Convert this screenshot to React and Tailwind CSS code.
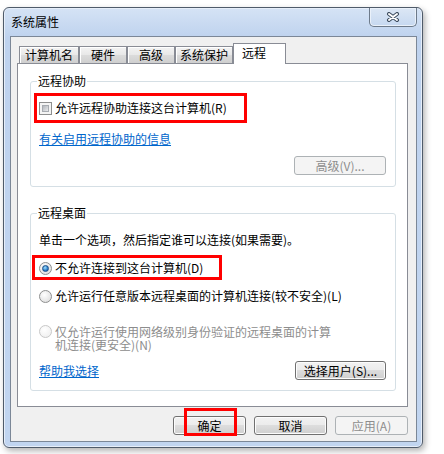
import React from 'react';

const tabs = [
  { label: '计算机名', w: 'w-[60px]' },
  { label: '硬件', w: 'w-[48px]' },
  { label: '高级', w: 'w-[48px]' },
  { label: '系统保护', w: 'w-[58px]' },
];

const Checkbox = () => (
  <div className="h-[13px] w-[13px] shrink-0 border border-[#8e8f8f] bg-[#f4f4f4] p-[2px]">
    <div className="h-full w-full border border-[#a7abb1] bg-[linear-gradient(135deg,#b3b7bd,#e9eaec)]" />
  </div>
);

const Radio = ({ checked, disabled }) => (
  <div
    className={`flex h-[13px] w-[13px] shrink-0 items-center justify-center rounded-full border ${
      disabled
        ? 'border-[#c8c8c8] bg-[radial-gradient(circle_at_40%_35%,#ffffff,#ececec)]'
        : 'border-[#8e8f8f] bg-[radial-gradient(circle_at_40%_35%,#ffffff,#d8d8d8)]'
    }`}
  >
    {checked && (
      <div className="h-[7px] w-[7px] rounded-full border border-[#1b4f87] bg-[radial-gradient(circle_at_40%_35%,#9fe0ff,#2a7cc7_60%,#0d4f95)]" />
    )}
  </div>
);

const Button = ({ children, disabled, className = '' }) => (
  <div
    className={`flex h-[19px] items-center justify-center rounded-[3px] border text-[12px] leading-[14px] ${
      disabled
        ? 'border-[#adb2b5] bg-[#f4f4f4] text-[#8d8d8d]'
        : 'border-[#707070] bg-[linear-gradient(to_bottom,#f2f2f2,#ebebeb_50%,#dddddd_50%,#cfcfcf)] text-black shadow-[inset_0_0_0_1px_#fcfcfc]'
    } ${className}`}
  >
    {children}
  </div>
);

const RedBox = ({ className }) => (
  <div className={`pointer-events-none absolute border-[3px] border-[#ff0000] ${className}`} />
);

export default function App() {
  return (
    <div className="h-[454px] w-[444px] overflow-hidden bg-white pl-[3px] pt-[7px] font-['Noto_Sans_CJK_SC',sans-serif] text-[12px] text-black">
      <div className="flex h-[441px] w-[420px] flex-col rounded-[6px] border border-[#4f5b6a] bg-[linear-gradient(to_bottom,#d5e3f5,#bed2ee_30px,#c1d5f0)] shadow-[inset_0_0_0_1px_#e6eef9,2px_3px_6px_rgba(0,0,0,0.3)]">
        {/* title bar */}
        <div className="flex h-[28px] items-start justify-between">
          <span className="pl-[7px] pt-[7px] leading-[14px]">系统属性</span>
          <div className="mr-[5px] flex h-[19px] w-[48px] items-center justify-center rounded-b-[5px] border border-t-0 border-[#6d7a8a] bg-[linear-gradient(to_bottom,#dce7f5,#c6d8f0)] shadow-[inset_0_0_0_1px_#eaf1fa]">
            <svg width="14" height="10" viewBox="0 0 14 10">
              <path d="M3 2 L11 8 M11 2 L3 8" stroke="#3b4a5c" strokeWidth="4" strokeLinecap="round" fill="none" />
              <path d="M3 2 L11 8 M11 2 L3 8" stroke="#ffffff" strokeWidth="2" strokeLinecap="round" fill="none" />
            </svg>
          </div>
        </div>

        {/* client area */}
        <div className="ml-[6px] flex h-[406px] w-[407px] flex-col border border-[#7b8797] bg-[#f0f0f0]">
          {/* tabs */}
          <div className="relative z-10 ml-[8px] mt-[6px] flex h-[20px] items-end">
            {tabs.map((t) => (
              <div
                key={t.label}
                className={`flex h-[17px] ${t.w} items-center justify-center border border-b-0 border-[#898c95] bg-[linear-gradient(to_bottom,#f3f3f3,#e8e8e8_50%,#dcdcdc_50%,#cfcfcf)] leading-[14px] shadow-[inset_1px_1px_0_#ffffff]`}
              >
                {t.label}
              </div>
            ))}
            <div className="-mb-px flex h-[21px] w-[53px] items-start border border-b-0 border-[#898c95] bg-white pl-[8px] pt-[2px] leading-[14px]">
              远程
            </div>
          </div>

          {/* tab panel */}
          <div className="ml-[6px] h-[344px] w-[391px] border border-[#898c95] bg-white">
            {/* 远程协助 */}
            <fieldset className="m-0 ml-[12px] mt-[9px] w-[366px] rounded-[3px] border border-[#d5dfe5] p-0 pb-[11px]">
              <legend className="ml-[6px] px-[1px] leading-[16px]">远程协助</legend>
              <div className="relative ml-[8px] mt-[12px] flex h-[14px] items-center gap-[3px]">
                <Checkbox />
                <span className="leading-[14px]">允许远程协助连接这台计算机(R)</span>
                <RedBox className="left-[-5px] top-[-8px] h-[30px] w-[213px]" />
              </div>
              <div className="ml-[8px] mt-[17px] h-[14px] leading-[14px] text-[#0066cc] underline">
                有关启用远程协助的信息
              </div>
              <div className="mr-[9px] mt-[10px] flex justify-end">
                <Button disabled className="w-[92px]">
                  高级(V)...
                </Button>
              </div>
            </fieldset>

            {/* 远程桌面 */}
            <fieldset className="m-0 ml-[12px] mt-[18px] w-[366px] rounded-[3px] border border-[#d5dfe5] p-0 pb-[10px]">
              <legend className="ml-[6px] px-[1px] leading-[16px]">远程桌面</legend>
              <div className="ml-[8px] mt-[12px] h-[14px] leading-[14px]">
                单击一个选项，然后指定谁可以连接(如果需要)。
              </div>
              <div className="relative ml-[8px] mt-[14px] flex h-[14px] items-center gap-[3px]">
                <Radio checked />
                <span className="leading-[14px]">不允许连接到这台计算机(D)</span>
                <RedBox className="left-[-7px] top-[-6px] h-[25px] w-[190px]" />
              </div>
              <div className="ml-[8px] mt-[14px] flex h-[14px] items-center gap-[3px]">
                <Radio />
                <span className="leading-[14px]">允许运行任意版本远程桌面的计算机连接(较不安全)(L)</span>
              </div>
              <div className="ml-[8px] mt-[22px] flex items-start gap-[3px]">
                <Radio disabled />
                <span className="w-[280px] leading-[13px] text-[#8d8d8d]">
                  仅允许运行使用网络级别身份验证的远程桌面的计算机连接(更安全)(N)
                </span>
              </div>
              <div className="ml-[8px] mr-[9px] mt-[10px] flex h-[19px] items-center justify-between">
                <span className="leading-[14px] text-[#0066cc] underline">帮助我选择</span>
                <Button className="w-[91px]">选择用户(S)...</Button>
              </div>
            </fieldset>
          </div>

          {/* dialog buttons */}
          <div className="mr-[8px] mt-[9px] flex justify-end gap-[8px]">
            <div className="relative">
              <Button className="w-[73px]">确定</Button>
              <RedBox className="left-[11px] top-[-8px] h-[28px] w-[53px]" />
            </div>
            <Button className="w-[73px]">取消</Button>
            <Button disabled className="w-[73px]">
              应用(A)
            </Button>
          </div>
        </div>
      </div>
    </div>
  );
}
